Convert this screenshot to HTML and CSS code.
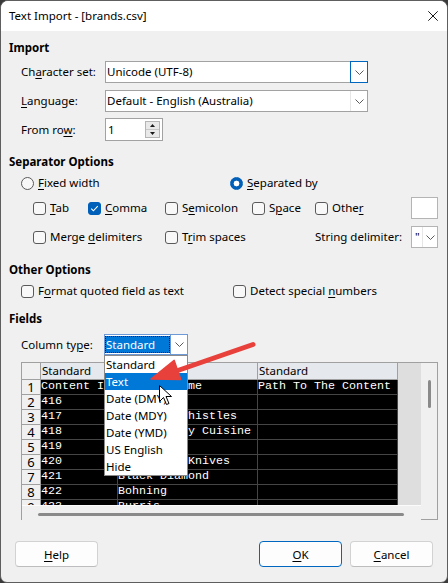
FILE: index.html
```html
<!DOCTYPE html>
<html>
<head>
<meta charset="utf-8">
<title>Text Import</title>
<link rel="stylesheet" href="styles.css">
</head>
<body>
<div class="window">
  <div class="titlebar">
    <span class="title">Text Import - [brands.csv]</span>
    <svg class="close" width="10" height="10" viewBox="0 0 10 10"><path d="M0.3 0.3L9.7 9.7M9.7 0.3L0.3 9.7" stroke="#1a1a1a" stroke-width="1" fill="none"/></svg>
  </div>
  <div class="content">
    <div class="heading sp-import">Import</div>

    <div class="field-row sp-charset">
      <span class="lbl">Ch<u>a</u>racter set:</span>
      <div class="combo combo-main">
        <span class="combo-text">Unicode (UTF-8)</span>
        <span class="combo-btn focused"><svg width="9" height="5" viewBox="0 0 9 5"><path d="M0.5 0.5L4.5 4.5L8.5 0.5" stroke="#5a5a5a" fill="none"/></svg></span>
      </div>
    </div>

    <div class="field-row sp-lang">
      <span class="lbl"><u>L</u>anguage:</span>
      <div class="combo combo-main">
        <span class="combo-text">Default - English (Australia)</span>
        <span class="combo-btn sep"><svg width="9" height="5" viewBox="0 0 9 5"><path d="M0.5 0.5L4.5 4.5L8.5 0.5" stroke="#5a5a5a" fill="none"/></svg></span>
      </div>
    </div>

    <div class="field-row sp-from">
      <span class="lbl">From ro<u>w</u>:</span>
      <div class="spin">
        <span class="spin-text">1</span>
        <span class="spin-btns">
          <span class="spin-b up"><svg width="5" height="3" viewBox="0 0 5 3"><path d="M0 3L2.5 0L5 3Z" fill="#1a1a1a"/></svg></span>
          <span class="spin-b"><svg width="5" height="3" viewBox="0 0 5 3"><path d="M0 0L2.5 3L5 0Z" fill="#1a1a1a"/></svg></span>
        </span>
      </div>
    </div>

    <div class="heading sp-sep">Separator Options</div>

    <div class="radio-row sp-radio">
      <label class="opt radio-first"><span class="radio"></span><span><u>F</u>ixed width</span></label>
      <label class="opt"><span class="radio on"></span><span><u>S</u>eparated by</span></label>
    </div>

    <div class="cb-grid1 sp-cb1">
      <label class="opt"><span class="cb"></span><span><u>T</u>ab</span></label>
      <label class="opt"><span class="cb on"><svg width="11" height="11" viewBox="0 0 11 11"><path d="M2.2 5.6L4.4 7.8L8.8 3.2" stroke="#fff" stroke-width="1.1" fill="none"/></svg></span><span><u>C</u>omma</span></label>
      <label class="opt"><span class="cb"></span><span>S<u>e</u>micolon</span></label>
      <label class="opt"><span class="cb"></span><span>S<u>p</u>ace</span></label>
      <label class="opt"><span class="cb"></span><span>Othe<u>r</u></span></label>
      <span class="textbox"></span>
    </div>

    <div class="cb-grid2 sp-cb2">
      <label class="opt"><span class="cb"></span><span>Merge <u>d</u>elimiters</span></label>
      <label class="opt"><span class="cb"></span><span>T<u>r</u>im spaces</span></label>
      <span>String delimiter:</span>
      <div class="mini-combo">
        <span class="mini-text">"</span>
        <span class="mini-btn"><svg width="9" height="5" viewBox="0 0 9 5"><path d="M0.5 0.5L4.5 4.5L8.5 0.5" stroke="#5a5a5a" fill="none"/></svg></span>
      </div>
    </div>

    <div class="heading sp-other">Other Options</div>

    <div class="cb-grid3 sp-cb3">
      <label class="opt"><span class="cb"></span><span>F<u>o</u>rmat quoted field as text</span></label>
      <label class="opt"><span class="cb"></span><span>Detect special <u>n</u>umbers</span></label>
    </div>

    <div class="heading sp-fields">Fields</div>

    <div class="field-row sp-coltype">
      <span class="lbl lbl-ct">Column ty<u>p</u>e:</span>
      <div class="ct-combo">
        <span class="ct-text">Standard</span>
        <span class="ct-btn"><svg width="9" height="5" viewBox="0 0 9 5"><path d="M0.5 0.5L4.5 4.5L8.5 0.5" stroke="#5a5a5a" fill="none"/></svg></span>
        <div class="dropdown">
          <div class="dd-item">Standard</div>
          <div class="dd-item sel">Text</div>
          <div class="dd-item">Date (DMY)</div>
          <div class="dd-item">Date (MDY)</div>
          <div class="dd-item">Date (YMD)</div>
          <div class="dd-item">US English</div>
          <div class="dd-item">Hide</div>
        </div>
      </div>
    </div>

    <div class="grid-frame sp-grid">
      <div class="grid-main">
        <div class="cells">
          <div class="corner"></div><div class="ch">Standard</div><div class="ch">Standard</div><div class="ch">Standard</div>
          <div class="rh">1</div><div class="dc">Content ID</div><div class="dc">Content Name</div><div class="dc">Path To The Content</div>
          <div class="rh">2</div><div class="dc">416</div><div class="dc">Avid</div><div class="dc"></div>
          <div class="rh">3</div><div class="dc">417</div><div class="dc">American Whistles</div><div class="dc"></div>
          <div class="rh">4</div><div class="dc">418</div><div class="dc">Asian Tasty Cuisine</div><div class="dc"></div>
          <div class="rh">5</div><div class="dc">419</div><div class="dc">Barnett</div><div class="dc"></div>
          <div class="rh">6</div><div class="dc">420</div><div class="dc">Bison Bay Knives</div><div class="dc"></div>
          <div class="rh">7</div><div class="dc">421</div><div class="dc">Black Diamond</div><div class="dc"></div>
          <div class="rh">8</div><div class="dc">422</div><div class="dc">Bohning</div><div class="dc"></div>
          <div class="rh">9</div><div class="dc">423</div><div class="dc">Burris</div><div class="dc"></div>
        </div>
        <div class="hscroll"><div class="hthumb"></div></div>
      </div>
      <div class="vscroll"><div class="vthumb"></div></div>
    </div>

    <div class="buttons">
      <button class="btn"><span><u>H</u>elp</span></button>
      <div class="btn-group">
        <button class="btn default"><span><u>O</u>K</span></button>
        <button class="btn"><span><u>C</u>ancel</span></button>
      </div>
    </div>
  </div>
</div>

<svg class="annotation" width="448" height="583" viewBox="0 0 448 583">
  <line x1="253" y1="344.5" x2="172" y2="372.5" stroke="#e8403b" stroke-width="5" stroke-linecap="round"/>
  <path d="M151 379L174.2 360.4L180.7 379.4Z" fill="#e8403b" stroke="#e8403b" stroke-width="1.5" stroke-linejoin="round"/>
  <path d="M159.5 385.5L159.5 401.5L163.5 397.5L166.5 404.5L169 403.5L166 396.5L171.5 396.5Z" fill="#fff" stroke="#000" stroke-width="1" stroke-linejoin="miter"/>
</svg>
</body>
</html>
```
FILE: styles.css
```css
* { box-sizing: border-box; }
html, body { margin: 0; padding: 0; }
body {
  width: 448px;
  height: 583px;
  overflow: hidden;
  background: #3a3a3a;
  font-family: "Noto Sans", "Open Sans", sans-serif;
  font-size: 11.5px;
  line-height: 16px;
  color: #000;
  position: relative;
}
u { text-decoration-thickness: 1px; text-underline-offset: 2px; }

.window {
  width: 448px;
  height: 583px;
  border: 1px solid #5e5e5e;
  border-radius: 8px 8px 7px 7px;
  background: #f0f0f0;
  overflow: hidden;
}
.titlebar {
  height: 30px;
  background: #ffffff;
  display: flex;
  align-items: center;
  justify-content: space-between;
  padding: 0 9px 0 8px;
}
.title { font-size: 11.5px; }

.content { padding-left: 8px; }

.heading { font-weight: 700; height: 16px; line-height: 16px; }

.sp-import { margin-top: 9px; }
.sp-charset { margin-top: 5px; }
.sp-lang { margin-top: 7px; }
.sp-from { margin-top: 6px; }
.sp-sep { margin-top: 13px; }
.sp-radio { margin-top: 5px; }
.sp-cb1 { margin-top: 6px; }
.sp-cb2 { margin-top: 7px; }
.sp-other { margin-top: 14px; }
.sp-cb3 { margin-top: 5px; }
.sp-fields { margin-top: 12px; }
.sp-coltype { margin-top: 7px; }
.sp-grid { margin-top: 7px; }

.field-row { display: flex; align-items: center; padding-left: 12px; }
.lbl { width: 84px; flex: none; }
.lbl-ct { width: 83px; }

.combo {
  display: flex;
  height: 22px;
  background: #fff;
  border: 1px solid #a2a2a2;
}
.combo-main { width: 263px; }
.combo-text { flex: 1; padding-left: 1px; line-height: 20px; white-space: nowrap; }
.combo-btn {
  width: 17px;
  display: flex;
  align-items: center;
  justify-content: center;
}
.combo-btn.sep { border-left: 1px solid #e6e6e6; }
.combo-btn.focused {
  width: 18px;
  margin: -1px -1px -1px 0;
  border: 1px solid #0067c0;
}

.spin {
  width: 58px;
  height: 23px;
  background: #fff;
  border: 1px solid #a2a2a2;
  display: flex;
  align-items: center;
  padding-left: 2px;
}
.spin-text { flex: 1; }
.spin-btns {
  width: 15px;
  height: 17px;
  margin-right: 2px;
  border: 1px solid #b5b5b5;
  background: #e9e9e9;
  display: flex;
  flex-direction: column;
}
.spin-b { flex: 1; display: flex; align-items: center; justify-content: center; }
.spin-b.up { border-bottom: 1px solid #c8c8c8; }

.opt { display: flex; align-items: center; gap: 4px; white-space: nowrap; }

.radio-row { display: flex; align-items: center; height: 16px; padding-left: 12px; }
.radio-first { width: 209px; }
.radio {
  width: 13px; height: 13px;
  border-radius: 50%;
  border: 1px solid #5a5a5a;
  background: #f8f8f8;
  flex: none;
}
.radio.on {
  border-color: #005fb8;
  background: radial-gradient(circle, #ffffff 0 2.6px, #005fb8 3.2px);
}

.cb {
  width: 13px; height: 13px;
  border: 1px solid #5a5a5a;
  border-radius: 3px;
  background: #f8f8f8;
  flex: none;
  display: flex; align-items: center; justify-content: center;
}
.cb.on { background: #005fb8; border-color: #005fb8; }

.cb-grid1 {
  display: grid;
  grid-template-columns: 55px 77px 87px 63px 96px 27px;
  align-items: center;
  height: 22px;
  padding-left: 24px;
}
.cb-grid2 {
  display: grid;
  grid-template-columns: 132px 150px 96px 27px;
  align-items: center;
  height: 22px;
  padding-left: 24px;
}
.cb-grid3 {
  display: grid;
  grid-template-columns: 212px 1fr;
  align-items: center;
  height: 16px;
  padding-left: 12px;
}
.textbox {
  width: 27px; height: 22px;
  background: #fff;
  border: 1px solid #b4b4b4;
}
.mini-combo {
  width: 27px; height: 22px;
  background: #fff;
  border: 1px solid #b4b4b4;
  display: flex;
}
.mini-text { width: 10px; padding-left: 3px; line-height: 20px; }
.mini-btn {
  flex: 1;
  border-left: 1px solid #e6e6e6;
  display: flex; align-items: center; justify-content: center;
}

.ct-combo {
  position: relative;
  width: 84px; height: 21px;
  border: 1px solid #6d9ad6;
  background: #fff;
  display: flex;
}
.ct-text {
  width: 65px;
  background: #0078d7;
  color: #fff;
  padding-left: 1px;
  line-height: 17px;
  outline: 1px dotted #1a1a1a;
  outline-offset: -1px;
  margin: 1px 0 1px 0;
}
.ct-btn {
  flex: 1;
  display: flex; align-items: center; justify-content: center;
  border-left: 1px solid #6d9ad6;
}
.dropdown {
  position: absolute;
  left: -1px;
  top: 20px;
  width: 84px;
  height: 121px;
  background: #fff;
  border: 1px solid #8a8a8a;
  z-index: 5;
}
.dd-item { height: 17px; line-height: 17px; padding-left: 1px; white-space: nowrap; }
.dd-item.sel { background: #0078d7; color: #fff; }

.grid-frame {
  margin-left: 12px;
  width: 417px;
  height: 158px;
  border: 1px solid #a0a0a0;
  border-bottom: none;
  display: flex;
}
.grid-main { width: 399px; display: flex; flex-direction: column; }
.cells {
  height: 142px;
  overflow: hidden;
  background: #dedede;
  display: grid;
  grid-template-columns: 19px 77px 140px 140px;
  grid-template-rows: 17px;
  grid-auto-rows: 15px;
}
.corner {
  background: #f0f0f0;
  border-right: 1px solid #a0a0a0;
  border-bottom: 1px solid #a0a0a0;
}
.ch {
  background: #e5e8ec;
  border-right: 1px solid #a0a0a0;
  border-bottom: 1px solid #a0a0a0;
  padding-left: 1px;
  line-height: 16px;
  white-space: nowrap;
  overflow: hidden;
}
.rh {
  background: #f0f0f0;
  border-right: 1px solid #a0a0a0;
  border-bottom: 1px solid #a0a0a0;
  text-align: center;
  font-size: 13px;
  line-height: 15px;
}
.dc {
  background: #000;
  color: #fff;
  border-right: 1px solid #454545;
  border-bottom: 1px solid #454545;
  font-family: "Liberation Mono", "DejaVu Sans Mono", monospace;
  font-size: 11.67px;
  line-height: 13px;
  white-space: nowrap;
  overflow: hidden;
}
.hscroll {
  height: 15px;
  background: #f0f0f0;
  border-top: 1px solid #fbfbfb;
  padding-top: 7px;
  padding-left: 16px;
}
.hthumb { width: 366px; height: 3px; background: #8a8a8a; border-radius: 1.5px; }
.vscroll {
  width: 16px;
  background: #f0f0f0;
  border-bottom: 1px solid #a0a0a0;
  padding-top: 17px;
  padding-left: 7px;
}
.vthumb { width: 3px; height: 28px; background: #8a8a8a; border-radius: 1.5px; }

.buttons {
  margin-top: 21px;
  display: flex;
  justify-content: space-between;
  padding-left: 6px;
  padding-right: 14px;
}
.btn-group { display: flex; gap: 8px; }
.btn {
  width: 83px; height: 26px;
  border: 1px solid #d2d2d2;
  border-bottom-color: #bdbdbd;
  border-radius: 4px;
  background: #fdfdfd;
  font-family: inherit;
  font-size: 11.5px;
  color: #000;
  padding: 0;
  display: flex; align-items: center; justify-content: center;
}
.btn.default { border: 1px solid #0067c0; }

.annotation { position: absolute; left: 0; top: 0; pointer-events: none; z-index: 10; }
```
